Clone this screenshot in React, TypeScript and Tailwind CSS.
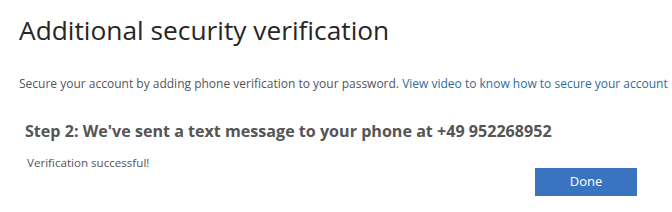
import React from 'react';

const App: React.FC = () => {
  return (
    <div className="w-[672px] h-[212px] bg-white overflow-hidden" style={{ fontFamily: '"Open Sans", "Noto Sans", sans-serif' }}>
      <div className="pl-[19px] pt-[12px]">
        <h1 className="text-[26.3px] leading-[36px] text-[#262626] font-normal">Additional security verification</h1>
        <p className="mt-[28px] text-[12px] leading-[16px] text-[#555]">
          Secure your account by adding phone verification to your password.{' '}
          <a className="text-[#2f6b9a]">View video to know how to secure your account</a>
        </p>
      </div>

      <section className="pl-[25px] pt-[29px]">
        <h2 className="text-[16.1px] leading-[20px] font-bold text-[#555]">Step 2: We've sent a text message to your phone at +49 952268952</h2>
        <div className="flex items-start justify-between pr-[35px]">
          <p className="mt-[15px] ml-[2px] text-[11.6px] leading-[14px] text-[#555]">Verification successful!</p>
          <button className="mt-[27px] w-[102px] h-[28px] bg-[#3a74c0] text-white text-[13px]">Done</button>
        </div>
      </section>
    </div>
  );
};

export default App;
